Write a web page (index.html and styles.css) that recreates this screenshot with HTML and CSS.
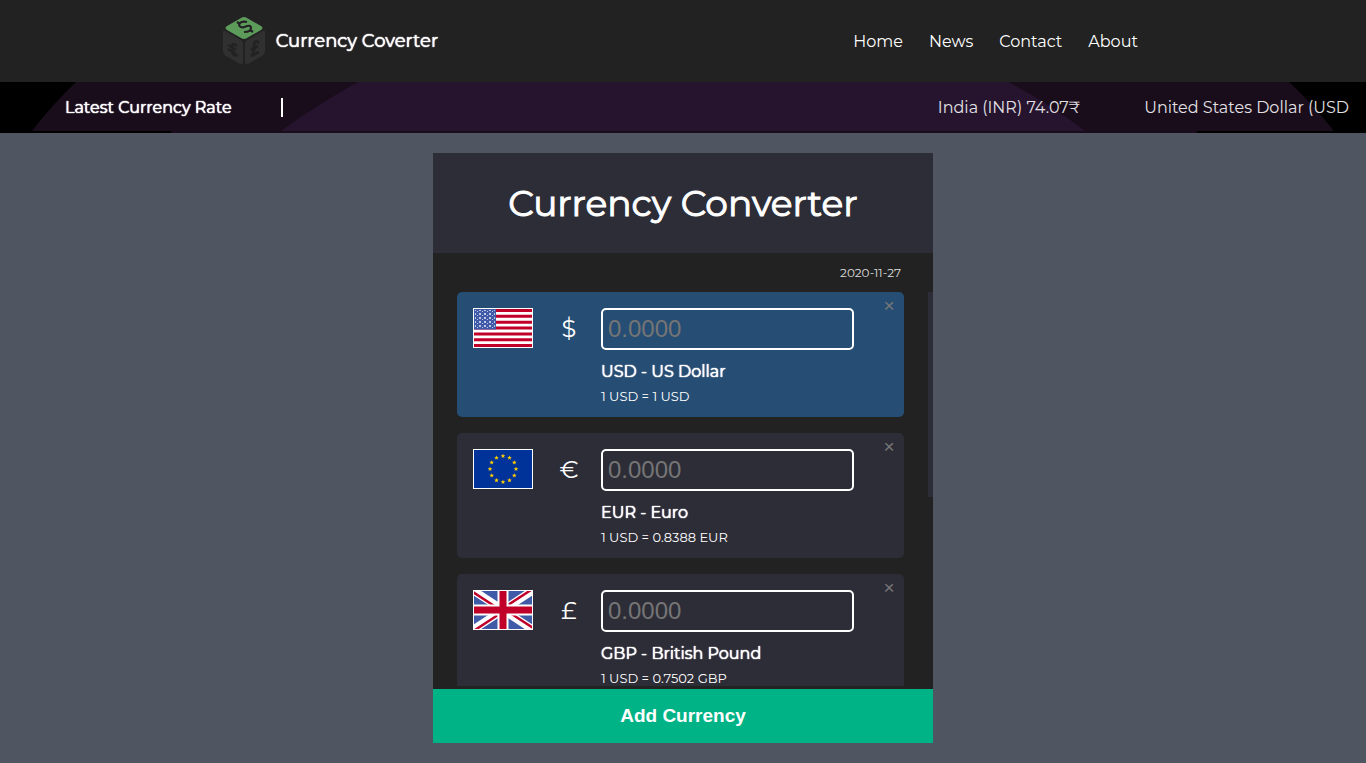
FILE: index.html
```html
<!DOCTYPE html>
<html lang="en">
<head>
<meta charset="utf-8">
<title>Currency Coverter</title>
<link rel="stylesheet" href="styles.css">
</head>
<body>
<header class="header">
  <div class="brand">
    <svg class="logo" viewBox="0 0 42 50" aria-hidden="true">
      <path d="M0 16Q0 14 2 15L18 24Q20 25 20 27V46Q20 49 17 48L3 40Q0 38 0 35Z" fill="#303030"/>
      <path d="M42 16Q42 14 40 15L24 24Q22 25 22 27V46Q22 49 25 48L39 40Q42 38 42 35Z" fill="#303030"/>
      <path d="M4 10L18 2Q21 0 24 2L38 10Q41 12 38 14L24 22Q21 24 18 22L4 14Q1 12 4 10Z" fill="#5d9b5b"/>
      <path d="M24 6Q19 5 17 7Q15 10 18 11Q20 12 24 10Q28 9 28 12Q28 16 21 16M17 8L14 6M27 14L30 16" fill="none" stroke="#222" stroke-width="2.2"/>
      <path d="M14 30Q9 26 9 31V35Q10 41 15 39M5 29L13 34M5 33L13 38" fill="none" stroke="#222" stroke-width="2.4"/>
      <path d="M36 27Q32 23 31 29V34Q31 37 28 40L36 36M28 34L35 30" fill="none" stroke="#222" stroke-width="2.6"/>
    </svg>
    <span class="brand-name">Currency Coverter</span>
  </div>
  <nav class="nav">
    <a href="#">Home</a><a href="#">News</a><a href="#">Contact</a><a href="#">About</a>
  </nav>
</header>
<section class="ticker">
  <svg class="ticker-art" viewBox="0 0 1366 51" preserveAspectRatio="none" aria-hidden="true">
    <path d="M0 0H1366V51H0Z" fill="#000"/>
    <path d="M76 0H1289Q1311 20 1334 49H1196L1198 51H170L172 49H32Q52 23 76 0Z" fill="#190d1b"/>
    <path d="M358 0H1008Q1050 22 1085 49H281Q315 24 358 0Z" fill="#26142f"/>
  </svg>
  <h2 class="ticker-title">Latest Currency Rate</h2>
  <div class="ticker-rates"><span>India (INR) 74.07₹</span><span>United States Dollar (USD)</span></div>
</section>
<main class="converter">
  <h1 class="title">Currency Converter</h1>
  <div class="body">
    <p class="date">2020-11-27</p>
    <div class="scroller">
      <ul class="list">
        <li class="card base">
          <svg class="flag" viewBox="0 0 58 38" role="img" aria-label="United States flag">
            <defs><pattern id="stars" width="5" height="4" patternUnits="userSpaceOnUse"><path d="M0 0h2v2h-2zM3 2h1v1h-1z" fill="#bdc6e4"/></pattern></defs>
            <path d="M0 0H58V38H0Z" fill="#fff"/>
            <path d="M0 1.5H58M0 7.3H58M0 13.2H58M0 19H58M0 24.9H58M0 30.7H58M0 36.5H58" stroke="#c00028" stroke-width="3"/>
            <path d="M0 0H22V20.5H0Z" fill="#3f5ba8"/><path d="M1 1H21V19H1Z" fill="url(#stars)"/>
          </svg>
          <span class="symbol">$</span>
          <div class="info">
            <input class="amount" id="usd" placeholder="0.0000">
            <label class="name" for="usd">USD - US Dollar</label>
            <p class="rate">1 USD = 1 USD</p>
          </div>
          <button class="close" aria-label="Remove USD">×</button>
        </li>
        <li class="card">
          <svg class="flag" viewBox="0 0 58 38" role="img" aria-label="European Union flag">
            <defs><path id="star" d="M0-2.3L.7-.8 2.3-.7 1 .4 1.4 2 0 1.1-1.4 2-1 .4-2.3-.7-.7-.8Z" fill="#ffcc00"/></defs>
            <path d="M0 0H58V38H0Z" fill="#039"/>
            <use href="#star" x="29" y="6"/><use href="#star" x="35.5" y="7.7"/><use href="#star" x="40.3" y="12.5"/><use href="#star" x="42" y="19"/><use href="#star" x="40.3" y="25.5"/><use href="#star" x="35.5" y="30.3"/><use href="#star" x="29" y="32"/><use href="#star" x="22.5" y="30.3"/><use href="#star" x="17.7" y="25.5"/><use href="#star" x="16" y="19"/><use href="#star" x="17.7" y="12.5"/><use href="#star" x="22.5" y="7.7"/>
          </svg>
          <span class="symbol">€</span>
          <div class="info">
            <input class="amount" id="eur" placeholder="0.0000">
            <label class="name" for="eur">EUR - Euro</label>
            <p class="rate">1 USD = 0.8388 EUR</p>
          </div>
          <button class="close" aria-label="Remove EUR">×</button>
        </li>
        <li class="card">
          <svg class="flag" viewBox="0 0 58 38" role="img" aria-label="United Kingdom flag">
            <path d="M0 0H58V38H0Z" fill="#3f5ba8"/>
            <path d="M0 0L58 38M58 0L0 38" stroke="#fff" stroke-width="8"/>
            <path d="M-1 1L28 20M59 37L30 18M57-1L28 18M1 39L30 20" stroke="#c00028" stroke-width="2.5"/>
            <path d="M29 0V38M0 19H58" stroke="#fff" stroke-width="11"/>
            <path d="M29 0V38M0 19H58" stroke="#c00028" stroke-width="7"/>
          </svg>
          <span class="symbol">£</span>
          <div class="info">
            <input class="amount" id="gbp" placeholder="0.0000">
            <label class="name" for="gbp">GBP - British Pound</label>
            <p class="rate">1 USD = 0.7502 GBP</p>
          </div>
          <button class="close" aria-label="Remove GBP">×</button>
        </li>
      </ul>
      <div class="thumb"></div>
    </div>
  </div>
  <button class="add">Add Currency</button>
</main>
</body>
</html>
```
FILE: styles.css
```css
* { box-sizing: border-box; margin: 0; padding: 0; }
body {
  min-height: 100vh;
  background: #4f5561;
  color: #fff;
  font-family: Montserrat, Inter, "Open Sans", sans-serif;
  font-size: 16px;
}
.header {
  display: flex;
  justify-content: space-between;
  align-items: center;
  height: 82px;
  padding: 0 16.7% 0 16.3%;
  background: #222;
}
.brand { display: flex; align-items: center; gap: 11px; }
.logo { width: 42px; height: 50px; }
.brand-name { font-size: 18px; text-shadow: 0 0 1px #fff, 0 0 1px #fff; }
.nav { display: flex; gap: 26px; }
.nav a { color: #fff; text-decoration: none; }
.ticker {
  position: relative;
  display: flex;
  align-items: center;
  height: 51px;
  padding: 0 17px 0 65px;
}
.ticker-art { position: absolute; inset: 0; width: 100%; height: 100%; }
.ticker-title {
  position: relative;
  width: 218px;
  border-right: 2px solid #fff;
  font-size: 16px;
  line-height: 19px;
  font-weight: 400;
  text-shadow: 0 0 1px #fff, 0 0 1px #fff;
}
.ticker-rates {
  position: relative;
  flex: 1;
  display: flex;
  gap: 64px;
  padding-left: 51%;
  overflow: hidden;
  white-space: nowrap;
  color: #e4e1e5;
}
.ticker-rates span { flex: none; }
.converter { width: 500px; max-width: 100%; margin: 20px auto; background: #222; }
.title {
  background: #2d2d37;
  font-size: 36px;
  line-height: 100px;
  font-weight: 400;
  text-align: center;
  -webkit-text-stroke: 1px #fff;
}
.body { padding-bottom: 3px; }
.date { padding: 12px 32px 11px; font-size: 12px; line-height: 16px; text-align: right; color: #ddd; }
.scroller { display: flex; align-items: flex-start; gap: 24px; padding-left: 24px; height: 394px; overflow: hidden; }
.list { flex: 1; display: grid; gap: 16px; list-style: none; }
.thumb { width: 5px; height: 205px; background: #2d2d37; }
.card {
  position: relative;
  display: flex;
  align-items: flex-start;
  padding: 16px 50px 9px 16px;
  border-radius: 5px;
  background: #2d2d37;
}
.base { background: #264d73; }
.flag { width: 60px; height: 40px; border: 1px solid #fff; }
.symbol { width: 72px; font-size: 24px; line-height: 42px; text-align: center; }
.info { flex: 1; min-width: 0; margin-left: -4px; }
.amount {
  display: block;
  width: 100%;
  height: 42px;
  padding: 0 5px;
  border: 2px solid #fff;
  border-radius: 5px;
  background: transparent;
  color: #fff;
  font: 24px "Liberation Sans", sans-serif;
}
.amount::placeholder { color: #757575; }
.name { display: block; margin-top: 9px; line-height: 26px; text-shadow: 0 0 1px #fff, 0 0 1px #fff; }
.rate { font-size: 13px; line-height: 23px; }
.close {
  position: absolute;
  top: 4px;
  right: 7px;
  width: 16px;
  border: 0;
  background: none;
  color: #777;
  font: 19px/20px "Liberation Sans", sans-serif;
}
.add {
  display: block;
  width: 100%;
  height: 54px;
  border: 0;
  background: #00b386;
  color: #fff;
  font: bold 19px "Liberation Sans", sans-serif;
}
```
